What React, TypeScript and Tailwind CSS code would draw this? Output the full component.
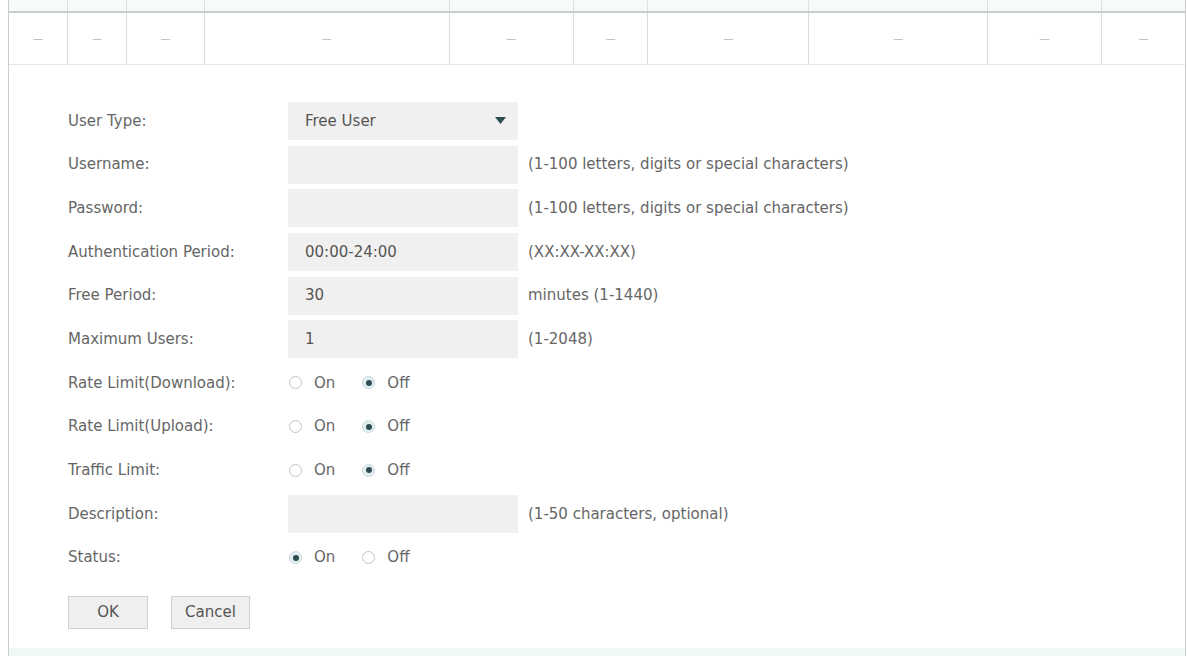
import React from "react";

const cols = [59, 59, 78, 245, 124, 75, 161, 179, 114, 83];

type Field =
  | { kind: "select"; label: string; value: string }
  | { kind: "input"; label: string; value?: string; hint?: string }
  | { kind: "radio"; label: string; on: boolean };

const fields: Field[] = [
  { kind: "select", label: "User Type:", value: "Free User" },
  { kind: "input", label: "Username:", hint: "(1-100 letters, digits or special characters)" },
  { kind: "input", label: "Password:", hint: "(1-100 letters, digits or special characters)" },
  { kind: "input", label: "Authentication Period:", value: "00:00-24:00", hint: "(XX:XX-XX:XX)" },
  { kind: "input", label: "Free Period:", value: "30", hint: "minutes (1-1440)" },
  { kind: "input", label: "Maximum Users:", value: "1", hint: "(1-2048)" },
  { kind: "radio", label: "Rate Limit(Download):", on: false },
  { kind: "radio", label: "Rate Limit(Upload):", on: false },
  { kind: "radio", label: "Traffic Limit:", on: false },
  { kind: "input", label: "Description:", hint: "(1-50 characters, optional)" },
  { kind: "radio", label: "Status:", on: true },
];

function Radio({ checked, label }: { checked: boolean; label: string }) {
  return (
    <span className="flex items-center gap-[12px]">
      {checked ? (
        <span className="flex h-[13px] w-[13px] items-center justify-center rounded-full border border-[#c9d9dc] bg-[#e3eef0]">
          <span className="h-[6px] w-[6px] rounded-full bg-[#2d4d52]" />
        </span>
      ) : (
        <span className="h-[13px] w-[13px] rounded-full border border-[#c4c4c4] bg-white" />
      )}
      <span>{label}</span>
    </span>
  );
}

export default function App() {
  return (
    <div
      className="h-[656px] w-[1187px] overflow-hidden bg-white text-[15px] text-[#666]"
      style={{ fontFamily: '"DejaVu Sans", Verdana, sans-serif' }}
    >
      <div className="ml-[8px] mr-[1px] flex h-[656px] flex-col border-x border-[#c9cfcf]">
        {/* table */}
        <div className="flex h-[11px] bg-[#f6fbfa]">
          {cols.map((w, i) => (
            <div key={i} style={{ width: w }} className="border-r border-[#dde3e3] last:border-r-0" />
          ))}
        </div>
        <div className="h-[2px] bg-[#c6cdcd]" />
        <div className="flex h-[52px] border-b border-[#e2e6e6]">
          {cols.map((w, i) => (
            <div
              key={i}
              style={{ width: w }}
              className="flex items-center justify-center border-r border-[#d9dddd] text-[10px] text-[#b5b5b5] last:border-r-0"
            >
              —
            </div>
          ))}
        </div>

        {/* form */}
        <div className="flex flex-1 flex-col pl-[59px] pt-[34px]">
          {fields.map((f, i) => (
            <div key={i} className="flex h-[43.7px] items-center">
              <div className="w-[220px]">{f.label}</div>
              {f.kind === "select" && (
                <div className="flex h-[38px] w-[230px] items-center justify-between bg-[#f1f0f0] pl-[17px] pr-[12px] text-[#555]">
                  <span>{f.value}</span>
                  <svg width="11" height="7" viewBox="0 0 11 7">
                    <path d="M0 0 H11 L5.5 7 Z" fill="#2d4d52" />
                  </svg>
                </div>
              )}
              {f.kind === "input" && (
                <>
                  <div className="flex h-[38px] w-[230px] items-center bg-[#f1f0f0] pl-[17px] text-[#555]">
                    {f.value}
                  </div>
                  <div className="pl-[10px]">{f.hint}</div>
                </>
              )}
              {f.kind === "radio" && (
                <div className="flex items-center gap-[27px] pl-[1px]">
                  <Radio checked={f.on} label="On" />
                  <Radio checked={!f.on} label="Off" />
                </div>
              )}
            </div>
          ))}
          <div className="mt-[16px] flex gap-[23px]">
            <button className="h-[33px] w-[80px] border border-[#cfcfcf] bg-[#efefef] text-[#555]">OK</button>
            <button className="h-[33px] w-[79px] border border-[#cfcfcf] bg-[#efefef] text-[#555]">Cancel</button>
          </div>
        </div>
        <div className="h-[8px] bg-[#effaf7]" />
      </div>
    </div>
  );
}
